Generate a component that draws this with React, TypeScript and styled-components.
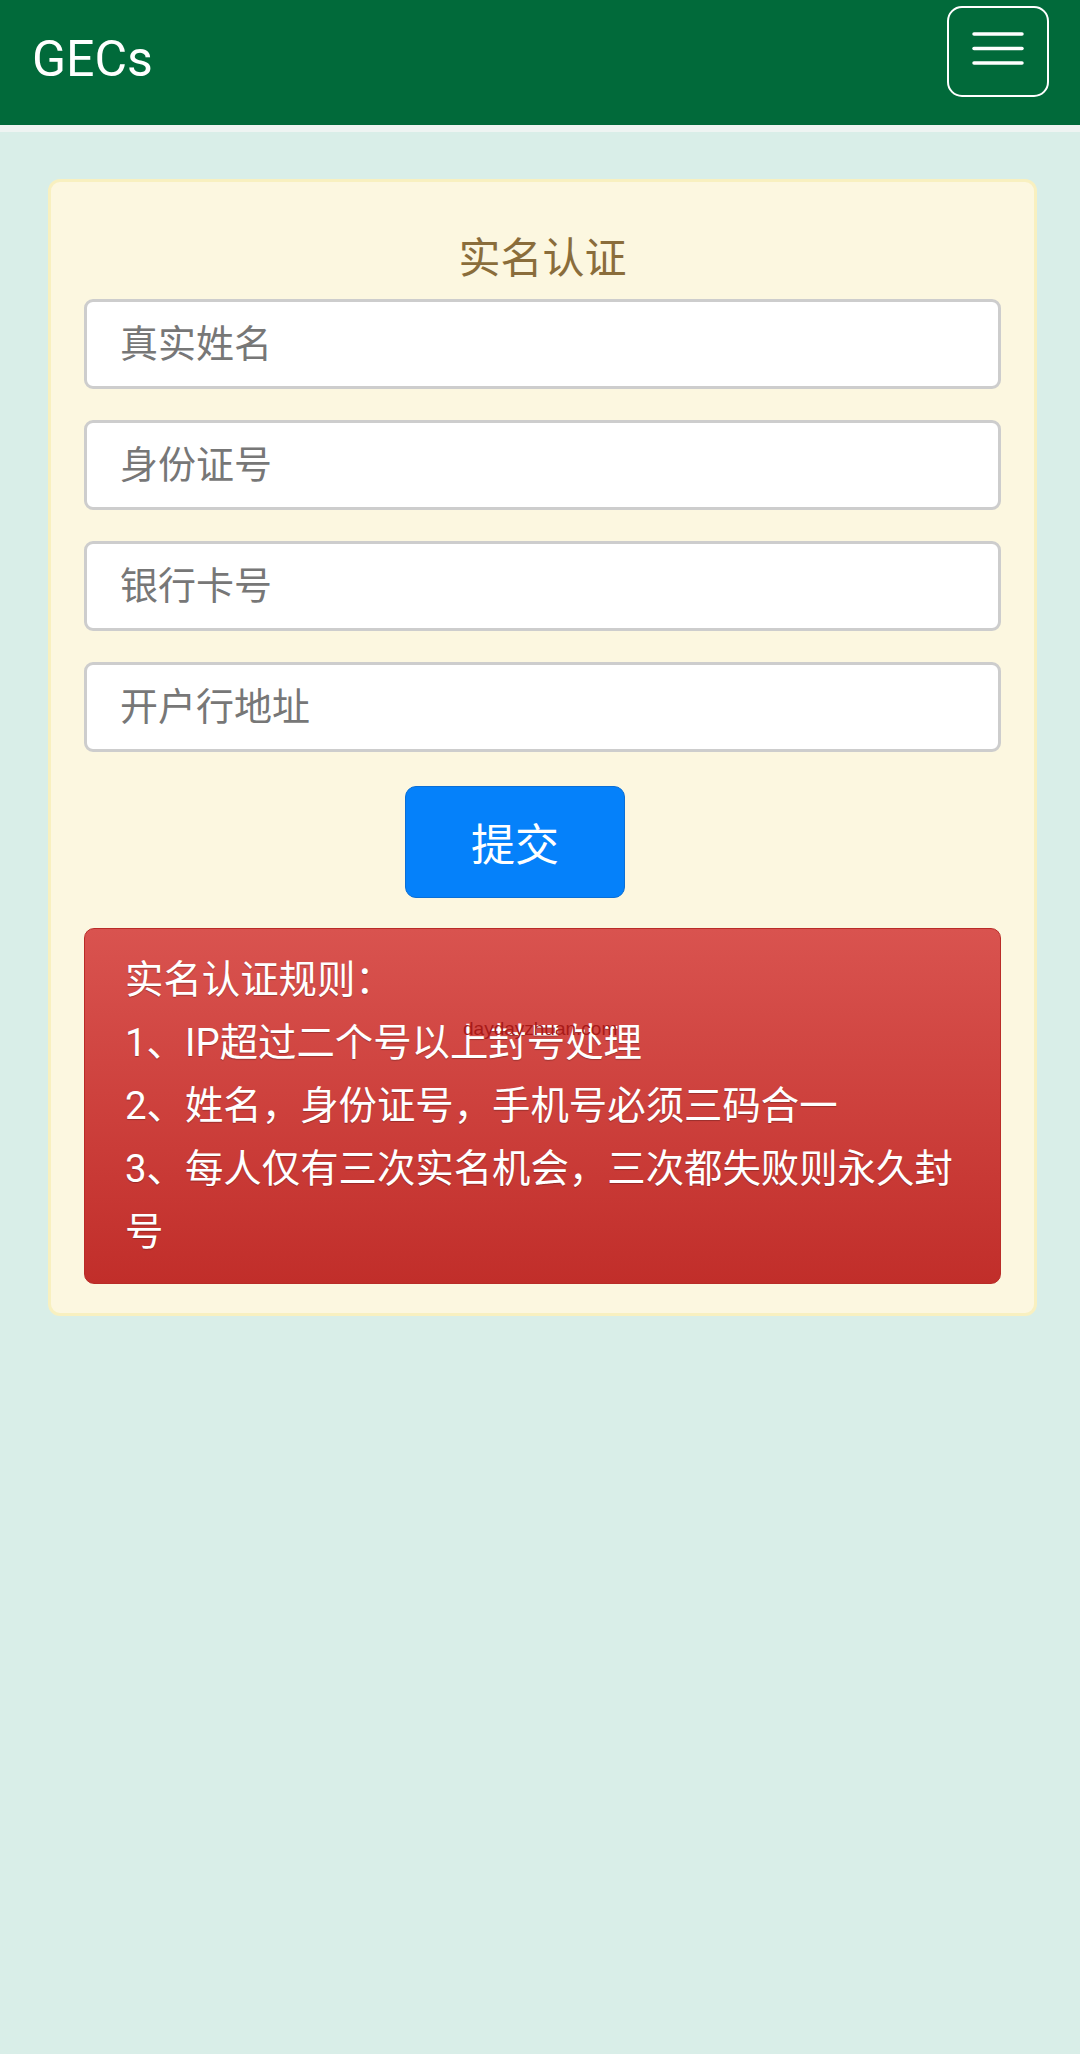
import styled, { createGlobalStyle } from 'styled-components'

const GlobalStyle = createGlobalStyle`
  body {
    margin: 0;
    background-color: #d9eee8;
    font-family: Roboto, "Noto Sans CJK SC", "Noto Sans", sans-serif;
  }
`

const Page = styled.div`
  min-height: 2054px;
`

const Navbar = styled.nav`
  display: flex;
  justify-content: space-between;
  align-items: flex-start;
  height: 125px;
  background-color: #016a3a;
  border-bottom: 7px solid #eef4f2;
`

const Brand = styled.div`
  margin: 34px 0 0 32px;
  font-size: 50px;
  line-height: 1;
  color: #ffffff;
`

const Toggler = styled.button`
  display: flex;
  justify-content: center;
  align-items: flex-start;
  box-sizing: border-box;
  width: 102px;
  height: 91px;
  margin: 6px 31px 0 0;
  padding: 24px 0 0;
  border: 2.5px solid #ffffff;
  border-radius: 15px;
  background: transparent;
`

const Card = styled.section`
  margin: 47px 43px 0 48px;
  padding: 52px 33px 29px;
  border: 3px solid #f8f0c0;
  border-radius: 12px;
  background-color: #fcf7e0;
`

const Title = styled.h2`
  margin: 0 0 15px;
  font-size: 42px;
  line-height: 50px;
  font-weight: 400;
  text-align: center;
  color: #8a6d3b;
`

const Field = styled.input`
  display: block;
  box-sizing: border-box;
  width: 100%;
  height: 90px;
  margin-bottom: 31px;
  padding: 0 0 0 33px;
  border: 3px solid #cdcdcd;
  border-radius: 9px;
  background-color: #ffffff;
  font-family: inherit;
  font-size: 38px;
  color: #333;
  outline: none;

  &::placeholder {
    color: #777;
  }
`

const SubmitButton = styled.button`
  display: block;
  width: 220px;
  height: 112px;
  margin: 34px 0 30px 321px;
  border: 1px solid #0a6fd6;
  border-radius: 11px;
  background-color: #0581fa;
  color: #ffffff;
  font-family: inherit;
  font-size: 44px;
`

const Rules = styled.div`
  position: relative;
  padding: 19px 40px 20px;
  border: 1px solid #b92c28;
  border-radius: 10px;
  background-image: linear-gradient(to bottom, #d9534f 0%, #c12e2a 100%);
  color: #ffffff;
  font-size: 38.4px;
  line-height: 63px;
  text-shadow: 0 1px 1px rgba(0, 0, 0, 0.25);
`

const Line = styled.div``

const Watermark = styled.span`
  position: absolute;
  left: 378px;
  top: 90px;
  font-family: "Liberation Sans", Arial, sans-serif;
  font-size: 19px;
  line-height: 1;
  color: #a81a18;
  text-shadow: none;
`

const MenuIcon = () => (
  <svg width="52" height="34" viewBox="0 0 52 34">
    <g stroke="#ffffff" strokeWidth="3.5" strokeLinecap="round">
      <line x1="2" y1="2" x2="50" y2="2" />
      <line x1="2" y1="16.5" x2="50" y2="16.5" />
      <line x1="2" y1="31" x2="50" y2="31" />
    </g>
  </svg>
)

const App = () => {
  return (
    <Page>
      <GlobalStyle />
      <Navbar>
        <Brand>GECs</Brand>
        <Toggler aria-label="menu">
          <MenuIcon />
        </Toggler>
      </Navbar>
      <Card>
        <Title>实名认证</Title>
        <Field placeholder="真实姓名" />
        <Field placeholder="身份证号" />
        <Field placeholder="银行卡号" />
        <Field placeholder="开户行地址" />
        <SubmitButton>提交</SubmitButton>
        <Rules>
          <Line>实名认证规则：</Line>
          <Line>1、IP超过二个号以上封号处理</Line>
          <Line>2、姓名，身份证号，手机号必须三码合一</Line>
          <Line>3、每人仅有三次实名机会，三次都失败则永久封号</Line>
          <Watermark>daydayzhuan.com</Watermark>
        </Rules>
      </Card>
    </Page>
  )
}

export default App
